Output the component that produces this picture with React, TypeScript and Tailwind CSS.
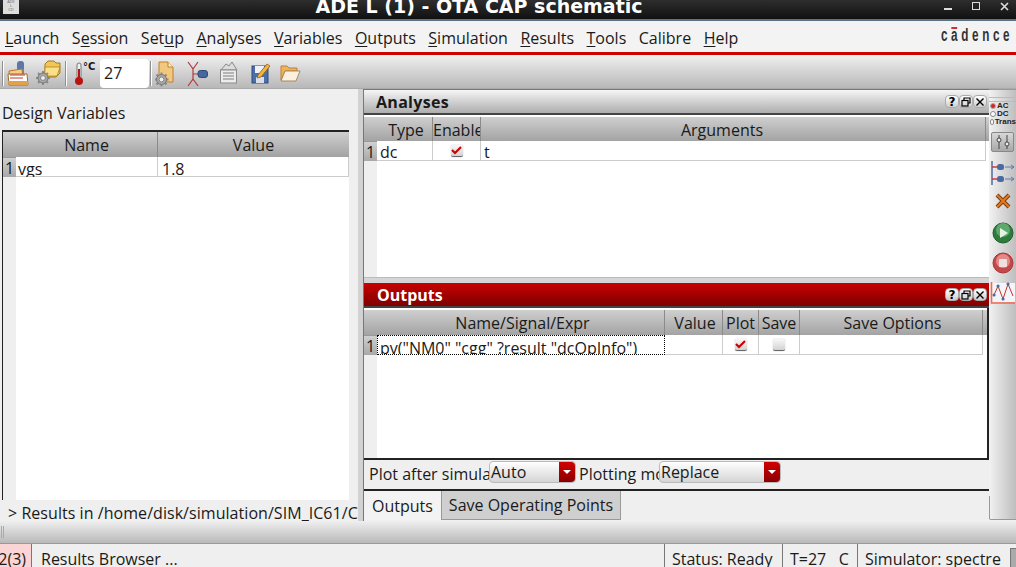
import type { ReactNode } from "react";

const FONT = "font-['Open_Sans','DejaVu_Sans',sans-serif]";
const HEAD = "bg-gradient-to-b from-[#cfcfcf] to-[#a3a3a3]";

const MENU = [
  ["L", "aunch"],
  ["S", "ession", 1],
  ["Set", "up", 3],
  ["A", "nalyses"],
  ["V", "ariables"],
  ["O", "utputs"],
  ["S", "imulation"],
  ["R", "esults"],
  ["T", "ools"],
  ["Calibre", ""],
  ["H", "elp"],
] as const;

function MenuItem({ text, rest, mark }: { text: string; rest: string; mark?: number }) {
  // mark = index of the underlined letter, first letter by default
  const whole = text + rest;
  const i = mark ?? 0;
  if (text === "Calibre") return <span>Calibre</span>;
  return (
    <span>
      {whole.slice(0, i)}
      <span className="underline underline-offset-2 decoration-1">{whole[i]}</span>
      {whole.slice(i + 1)}
    </span>
  );
}

function Sep() {
  return <div className="w-px h-[25px] bg-[#8f8f8f] border-r border-white box-content" />;
}

function Gear({ x, y }: { x: number; y: number }) {
  return (
    <g transform={`translate(${x} ${y})`}>
      <path d="M0-7V7M-7 0H7M-5-5 5 5M-5 5 5-5" stroke="#8a8a8a" strokeWidth="2" />
      <circle r="5" fill="#a8a8a8" stroke="#777" strokeWidth="1" />
      <circle r="2.4" fill="#eeeeee" stroke="#777" strokeWidth="0.8" />
    </g>
  );
}

function SessionIcon() {
  return (
    <svg width="22" height="26" viewBox="0 0 22 26">
      <rect x="10" y="0" width="7" height="10" rx="3" fill="#5b78a8" />
      <rect x="12" y="8" width="5" height="8" fill="#6b86b0" />
      <path d="M2 10 15 8 16 18 3 21Z" fill="#f5cf82" stroke="#b5752a" />
      <path d="M1 13 20 13 21 24 2 24Z" fill="#fff" stroke="#a0682a" />
      <path d="M1 20H21V24H2Z" fill="#e3a04a" />
      <path d="M3 14H18M3 17H16" stroke="#c23a2a" strokeWidth="1" />
    </svg>
  );
}

function GearFolderIcon() {
  return (
    <svg width="25" height="27" viewBox="0 0 25 27">
      <path d="M9 4 12 1H18L20 3H24V13L20 17H9Z" fill="#f3c552" stroke="#a57a20" />
      <path d="M9 7H24L21 16H9Z" fill="#fbe08a" stroke="#a57a20" strokeWidth="0.7" />
      <Gear x={7} y={18} />
    </svg>
  );
}

function ThermoIcon() {
  return (
    <span className="flex items-start w-[18px] h-[24px] relative">
      <svg width="10" height="24" viewBox="0 0 10 24">
        <rect x="3" y="1" width="4" height="15" rx="2" fill="#efefef" stroke="#777" />
        <rect x="4" y="7" width="2" height="10" fill="#b81414" />
        <circle cx="5" cy="19" r="4" fill="#b81414" />
      </svg>
      <span className="absolute left-[9px] -top-[3px] text-[10px] leading-[16px] font-bold font-['DejaVu_Sans',sans-serif]">°C</span>
    </span>
  );
}

function GearDocIcon() {
  return (
    <svg width="20" height="26" viewBox="0 0 20 26">
      <path d="M4 1H13L18 6V21H4Z" fill="#f2c77e" stroke="#c0802c" />
      <path d="M13 1V6H18" fill="#fff1d0" stroke="#c0802c" />
      <Gear x={6.5} y={18.5} />
    </svg>
  );
}

function TransistorIcon() {
  return (
    <svg width="22" height="28" viewBox="0 0 22 28">
      <path d="M1 2 6 9V19L1 26M11 2 6 9M11 26 6 19M6 14H11" stroke="#b5393d" strokeWidth="1.2" fill="none" />
      <rect x="11" y="10.5" width="9.5" height="7" rx="2.5" fill="#47689d" stroke="#2e4a78" />
    </svg>
  );
}

function NoteIcon() {
  return (
    <svg width="20" height="26" viewBox="0 0 20 26">
      <path d="M2 9 7 3 10 5 13 1 18 9Z" fill="#dcdcdc" stroke="#8a8a8a" />
      <rect x="1.5" y="9" width="16" height="13" fill="#ececec" stroke="#8a8a8a" />
      <path d="M4 12H15M4 15H15M4 18H15" stroke="#7c7c7c" />
    </svg>
  );
}

function SaveEditIcon() {
  return (
    <svg width="20" height="26" viewBox="0 0 20 26">
      <rect x="1" y="5" width="16" height="17" fill="#4e6ea8" stroke="#2f4a80" />
      <rect x="4" y="5" width="9" height="7" fill="#eef2f8" />
      <rect x="5" y="16" width="8" height="6" fill="#d9dfe9" />
      <path d="M7 14 16 3 19 5 10 16 6 17Z" fill="#f0b83a" stroke="#9a5a1a" strokeWidth="0.8" />
    </svg>
  );
}

function FolderIcon() {
  return (
    <svg width="21" height="22" viewBox="0 0 21 22">
      <path d="M1 17V3H7L9 5H17V8H5L1 17Z" fill="#efb25c" stroke="#bd8236" />
      <path d="M1 18 5 8H20L16 18Z" fill="#fbf0dd" stroke="#a98a5e" />
    </svg>
  );
}

function Check({ on }: { on?: boolean }) {
  return (
    <span className="flex w-3 h-3 items-center justify-center rounded-[2px] bg-gradient-to-b from-[#f8f8f8] to-[#d2d2d2] border-b border-[#666] shadow-[0_0_1px_#888]">
      {on && (
        <svg width="11" height="10" viewBox="0 0 11 10">
          <path d="M1 5 4 8 10 2" stroke="#d00000" strokeWidth="2.2" fill="none" />
        </svg>
      )}
    </span>
  );
}

function TitleButton({ children }: { children: ReactNode }) {
  return (
    <span className="flex w-[14px] h-[13px] items-center justify-center rounded-[4px] bg-gradient-to-b from-white to-[#cfcfcf] border border-[#aaa]">
      {children}
    </span>
  );
}

function DockButtons() {
  return (
    <div className="flex items-center">
      <TitleButton>
        <span className="text-[12px] leading-none font-bold text-black font-['DejaVu_Sans',sans-serif]">?</span>
      </TitleButton>
      <TitleButton>
        <svg width="10" height="10" viewBox="0 0 10 10" fill="none" stroke="#000" strokeWidth="1.2">
          <path d="M3 3V1H9V6H7" />
          <rect x="1" y="3.5" width="6" height="5.5" />
        </svg>
      </TitleButton>
      <TitleButton>
        <svg width="10" height="10" viewBox="0 0 10 10" stroke="#000" strokeWidth="1.4">
          <path d="M1.5 1.5 8.5 8.5M8.5 1.5 1.5 8.5" />
        </svg>
      </TitleButton>
    </div>
  );
}

function Th({ w, children }: { w: string; children?: ReactNode }) {
  return <div className={`${w} shrink-0 border-r border-[#8a8a8a] text-center overflow-hidden whitespace-nowrap`}>{children}</div>;
}

function RowNum() {
  return (
    <div className="w-[13px] shrink-0 bg-gradient-to-b from-[#d0d0d0] to-[#a8a8a8] border-t border-[#999] text-center leading-[20px]">1</div>
  );
}

function Combo({ w, label }: { w: string; label: string }) {
  return (
    <div className={`${w} h-[22px] shrink-0 flex rounded-[4px] bg-gradient-to-b from-white to-[#d5d5d5] border border-[#bbb] leading-[20px]`}>
      <span className="flex-1 pl-[1px]">{label}</span>
      <span className="w-4 flex items-center justify-center rounded-r-[4px] bg-gradient-to-b from-[#d00000] to-[#8c0000]">
        <span className="w-0 h-0 border-x-[4px] border-x-transparent border-t-[4px] border-t-white" />
      </span>
    </div>
  );
}

function SideToolbar() {
  return (
    <div className="relative w-[27px] shrink-0 h-[431px] flex flex-col items-center bg-gradient-to-r from-[#f2f2f2] to-[#bebebe] border-t border-b border-[#999] rounded-bl-[2px]">
      {/* the left edge only shows below the icons */}
      <span className="absolute left-0 bottom-0 w-px h-[23px] bg-[#999]" />
      <div className="w-full mt-[7px] h-[5px] border-y border-[#bbb]" />
      <div className="w-full pl-[1px] text-[8px] leading-[8px] font-bold text-[#222] font-['Liberation_Sans',sans-serif]">
        <div className="flex items-center gap-[1px]">
          <span className="w-[6px] h-[6px] rounded-full bg-[#e02020] border border-[#aaa]" />
          AC
        </div>
        <div className="flex items-center gap-[1px]">
          <span className="w-[6px] h-[6px] rounded-full bg-white border border-[#888]" />
          DC
        </div>
        <div className="flex items-center gap-[1px]">
          <span className="w-[6px] h-[6px] rounded-full bg-white border border-[#888]" />
          Trans
        </div>
      </div>
      <div className="mt-[6px] w-[23px] h-[20px] flex items-center justify-center rounded-[2px] bg-gradient-to-b from-[#d8d8d8] to-[#a8a8a8] border border-[#888]">
        <svg width="18" height="16" viewBox="0 0 18 16" fill="none" stroke="#444">
          <path d="M5 1V4M5 8V15M13 1V8M13 12V15" />
          <circle cx="5" cy="6" r="2" fill="#eee" />
          <circle cx="13" cy="10" r="2" fill="#eee" />
        </svg>
      </div>
      <svg className="mt-[9px]" width="26" height="24" viewBox="0 0 26 24" fill="none">
        <path d="M2 0V24" stroke="#4a6aa5" strokeWidth="1.5" />
        <path d="M2 6H7M2 18H7" stroke="#d03a3a" strokeWidth="1.5" />
        <rect x="7" y="3" width="7" height="6" rx="2.5" fill="#4a6aa5" />
        <rect x="7" y="15" width="7" height="6" rx="2.5" fill="#4a6aa5" />
        <path d="M15 6H24M21 4 24 6 21 8M15 18H24M21 16 24 18 21 20" stroke="#5c7ab0" />
      </svg>
      <svg className="mt-[8px]" width="16" height="16" viewBox="0 0 16 16">
        <path d="M2 2 14 14M14 2 2 14" stroke="#7a3a10" strokeWidth="4" />
        <path d="M2 2 14 14M14 2 2 14" stroke="#e07a20" strokeWidth="2.2" />
      </svg>
      <svg className="mt-[13px]" width="22" height="22" viewBox="0 0 22 22">
        <circle cx="11" cy="11" r="10" fill="#2e7b3e" stroke="#1f5c2c" />
        <circle cx="11" cy="8" r="7" fill="#5ea86c" />
        <path d="M8 6 16 11 8 16Z" fill="#e4f2e4" />
      </svg>
      <svg className="mt-[8px]" width="22" height="22" viewBox="0 0 22 22">
        <circle cx="11" cy="11" r="10" fill="#c54848" stroke="#a93535" />
        <circle cx="11" cy="9" r="7" fill="#e28a8a" />
        <rect x="7" y="7" width="8" height="8" rx="1" fill="#f2dede" />
      </svg>
      <svg className="mt-[7px]" width="25" height="24" viewBox="0 0 25 24" fill="none">
        <rect x="2" y="2" width="23" height="19" fill="#f3f5fb" />
        <path d="M1.5 1V22H25" stroke="#ee6a50" strokeWidth="1.6" />
        <path d="M4 14 8 5 13 18 18 3 23 15" stroke="#c0392b" strokeWidth="1" />
        <path d="M8 5H8.1M13 18H13.1M18 3H18.1M4 14H4.1" stroke="#4a6aa5" strokeWidth="3" strokeLinecap="round" />
      </svg>
    </div>
  );
}

export default function App() {
  return (
    <div className={`w-[1016px] h-[567px] overflow-hidden flex flex-col bg-[#efefef] text-[#1a1a1a] text-[16px] ${FONT}`}>
      {/* window title */}
      <div className="h-[21px] shrink-0 relative flex justify-center overflow-hidden bg-gradient-to-b from-[#2e2e2e] to-[#111] border-b-2 border-[#5d7284]">
        <span className="absolute left-[3px] top-0 w-[16px] h-[14px] bg-[#ddd] text-[4px] leading-[4px] text-[#666] text-center">ADE<br />L<br />CD</span>
        <span className="ml-[-58px] mt-[-6px] text-[19px] leading-[24px] font-bold text-white whitespace-nowrap font-['DejaVu_Sans',sans-serif]">
          ADE L (1) - OTA CAP schematic
        </span>
        <div className="absolute right-[7px] top-[2px] flex items-start gap-[20px]">
          <span className="w-2 h-[2px] mt-[6px] bg-[#ddd]" />
          <span className="w-2 h-2 border border-[#ddd]" />
          <svg width="9" height="9" viewBox="0 0 9 9" stroke="#ddd" strokeWidth="1.6">
            <path d="M1 1 8 8M8 1 1 8" />
          </svg>
        </div>
      </div>

      {/* menu */}
      <div className="h-[34px] shrink-0 relative flex items-center pl-[5px] bg-[#f3f3f3] border-b-[3px] border-[#cc0000]">
        <div className="flex gap-[12.5px] pt-[2px]">
          {MENU.map((m) => (
            <MenuItem key={m[0] + m[1]} text={m[0]} rest={m[1]} mark={m[2]} />
          ))}
        </div>
        <span className="absolute right-[3px] top-[4px] origin-right scale-x-[0.65] text-[18px] leading-[20px] font-bold tracking-[5.6px] text-[#333] font-['Liberation_Sans',sans-serif]">
          cadence
          <span className="absolute left-[16px] top-[2px] w-[9px] h-[2px] bg-[#cc3333]" />
        </span>
      </div>

      {/* toolbar */}
      <div className="h-[34px] shrink-0 flex items-center pl-[2px] pt-[4px] bg-gradient-to-b from-[#f0f0f0] to-[#b8b8b8] border-b border-[#aaa]">
        <Sep />
        <span className="ml-[3px] flex"><SessionIcon /></span>
        <span className="ml-[7px] flex"><GearFolderIcon /></span>
        <span className="ml-[4px]"><Sep /></span>
        <span className="ml-[7px] flex"><ThermoIcon /></span>
        <div className="ml-[8px] w-[49px] h-[29px] rounded-[4px] bg-white pl-[4px] leading-[29px]">27</div>
        <span className="ml-[1px]"><Sep /></span>
        <span className="ml-[3px] flex"><GearDocIcon /></span>
        <span className="ml-[12px] flex"><TransistorIcon /></span>
        <span className="ml-[10px] flex"><NoteIcon /></span>
        <span className="ml-[12px] flex"><SaveEditIcon /></span>
        <span className="ml-[9px] flex"><FolderIcon /></span>
      </div>

      {/* central area */}
      <div className="h-[432px] shrink-0 flex">
        {/* design variables */}
        <div className="w-[358px] shrink-0 flex flex-col">
          <div className="h-[41px] shrink-0 pl-[2px] pt-[13px] leading-[22px]">Design Variables</div>
          <div className="h-[370px] ml-[2px] mr-[9px] flex flex-col border-l border-t-2 border-[#222]">
            <div className={`h-[25px] shrink-0 flex pl-[13px] leading-[27px] ${HEAD}`}>
              <Th w="w-[142px]">Name</Th>
              <div className="w-[191px] text-center">Value</div>
            </div>
            <div className="h-[20px] shrink-0 flex leading-[24px] overflow-hidden">
              <RowNum />
              <div className="w-[142px] bg-white border-r border-b border-[#ccc] pl-[2px]">vgs</div>
              <div className="w-[191px] bg-white border-r border-b border-[#ccc] pl-[4px]">1.8</div>
            </div>
            <div className="flex-1 flex">
              <div className="w-[13px]" />
              <div className="w-[333px] bg-white" />
            </div>
          </div>
          <div className="h-[21px] pl-[8px] leading-[26px] tracking-[0.05px] whitespace-nowrap overflow-hidden">&gt; Results in /home/disk/simulation/SIM_IC61/C</div>
        </div>

        {/* splitter */}
        <div className="w-[6px] shrink-0 bg-[#d2d2d2] border-r border-[#777]" />

        {/* docks */}
        <div className="w-[625px] shrink-0 flex flex-col">
          <div className="h-[26px] shrink-0 flex items-center justify-between pl-[12px] pr-[2px] border-t border-[#777] bg-gradient-to-b from-[#f6f6f6] to-[#aeaeae] border-b-2 border-b-[#444]">
            <span className="font-bold text-[16px] tracking-[0.3px]">Analyses</span>
            <DockButtons />
          </div>
          <div className="h-[162px] shrink-0 flex flex-col bg-white">
            <div className={`h-[24px] shrink-0 flex pl-[13px] leading-[26px] mt-[2px] ${HEAD}`}>
              <Th w="w-[56px] pl-[3px]">Type</Th>
              <Th w="w-[48px]">Enable</Th>
              <div className="w-[505px] pr-[22px] border-r border-[#8a8a8a] text-center">Arguments</div>
            </div>
            <div className="h-[20px] shrink-0 flex leading-[23px] overflow-hidden">
              <RowNum />
              <div className="w-[56px] border-r border-b border-[#ccc] pl-[3px]">dc</div>
              <div className="w-[48px] border-r border-b border-[#ccc] flex items-center justify-center"><Check on /></div>
              <div className="w-[505px] border-r border-b border-[#ccc] pl-[3px]">t</div>
            </div>
            <div className="flex-1 flex">
              <div className="w-[13px] bg-[#efefef]" />
            </div>
          </div>
          <div className="h-[6px] shrink-0 bg-[#d5d5d5] border-t border-[#bbb]" />
          <div className="h-[25px] shrink-0 flex items-center justify-between pl-[13px] pr-[2px] bg-gradient-to-b from-[#c90000] to-[#800000] border-b-2 border-[#444]">
            <span className="font-bold text-[16px] text-white">Outputs</span>
            <DockButtons />
          </div>
          <div className="h-[152px] shrink-0 flex flex-col bg-white border-b-2 border-r-2 border-[#222]">
            <div className={`h-[25px] shrink-0 flex pl-[14px] leading-[27px] mt-[2px] ${HEAD}`}>
              <Th w="w-[287px] pl-[3px]">Name/Signal/Expr</Th>
              <Th w="w-[58px] pl-[3px]">Value</Th>
              <Th w="w-[36px]">Plot</Th>
              <Th w="w-[41px]">Save</Th>
              <Th w="w-[183px] pl-[3px]">Save Options</Th>
            </div>
            <div className="h-[20px] shrink-0 flex leading-[25px] overflow-hidden">
              <RowNum />
              <div className="w-[288px] border border-dotted border-black pl-[2px] whitespace-nowrap overflow-hidden">pv("NM0" "cgg" ?result "dcOpInfo")</div>
              <div className="w-[58px] border-r border-b border-[#ccc]" />
              <div className="w-[36px] border-r border-b border-[#ccc] flex items-center justify-center"><Check on /></div>
              <div className="w-[41px] border-r border-b border-[#ccc] flex items-center justify-center"><Check /></div>
              <div className="w-[183px] border-r border-b border-[#ccc]" />
            </div>
            <div className="flex-1 flex">
              <div className="w-[13px] bg-[#efefef]" />
            </div>
          </div>
          <div className="h-[31px] shrink-0 flex items-start pl-[5px] pt-[1px] border-b-2 border-[#222] overflow-hidden whitespace-nowrap leading-[26px]">
            <span className="w-[120px] overflow-hidden">Plot after simulation</span>
            <Combo w="w-[87px]" label="Auto" />
            <span className="ml-[3px] w-[80px] overflow-hidden">Plotting mode</span>
            <Combo w="w-[122px]" label="Replace" />
          </div>
          <div className="flex-1 flex">
            <div className="w-[77px] h-[29px] text-center leading-[30px] bg-[#f3f3f3]">Outputs</div>
            <div className="w-[180px] h-[29px] text-center leading-[28px] bg-[#cfcfcf] border-x border-b border-[#999]">Save Operating Points</div>
          </div>
        </div>

        <SideToolbar />
      </div>

      {/* lower bar, mostly empty */}
      <div className="h-[23px] shrink-0 flex items-center pl-[1px] bg-gradient-to-b from-[#efefef] to-[#b9b9b9] border-b border-[#999]">
        <span className="w-[3px] h-[12px] border-x border-[#aaa]" />
      </div>

      {/* status bar */}
      <div className="flex-1 flex leading-[31px] whitespace-nowrap overflow-hidden">
        <div className="w-[32px] shrink-0 bg-[#fbd5d5] border-r border-[#777] flex justify-end pr-[5px]">2(3)</div>
        <div className="w-[632px] shrink-0 pl-[9px]">Results Browser ...</div>
        <div className="w-[118px] shrink-0 pl-[7px] border-l border-[#777]">Status: Ready</div>
        <div className="w-[75px] shrink-0 pl-[7px] border-l border-[#777]">T=27 &nbsp;&nbsp;C</div>
        <div className="w-[153px] shrink-0 pl-[7px] border-l border-[#777]">Simulator: spectre</div>
        <div className="w-[6px] shrink-0 mt-[4px] bg-[#aaa] border-t border-l border-[#777]" />
      </div>
    </div>
  );
}
